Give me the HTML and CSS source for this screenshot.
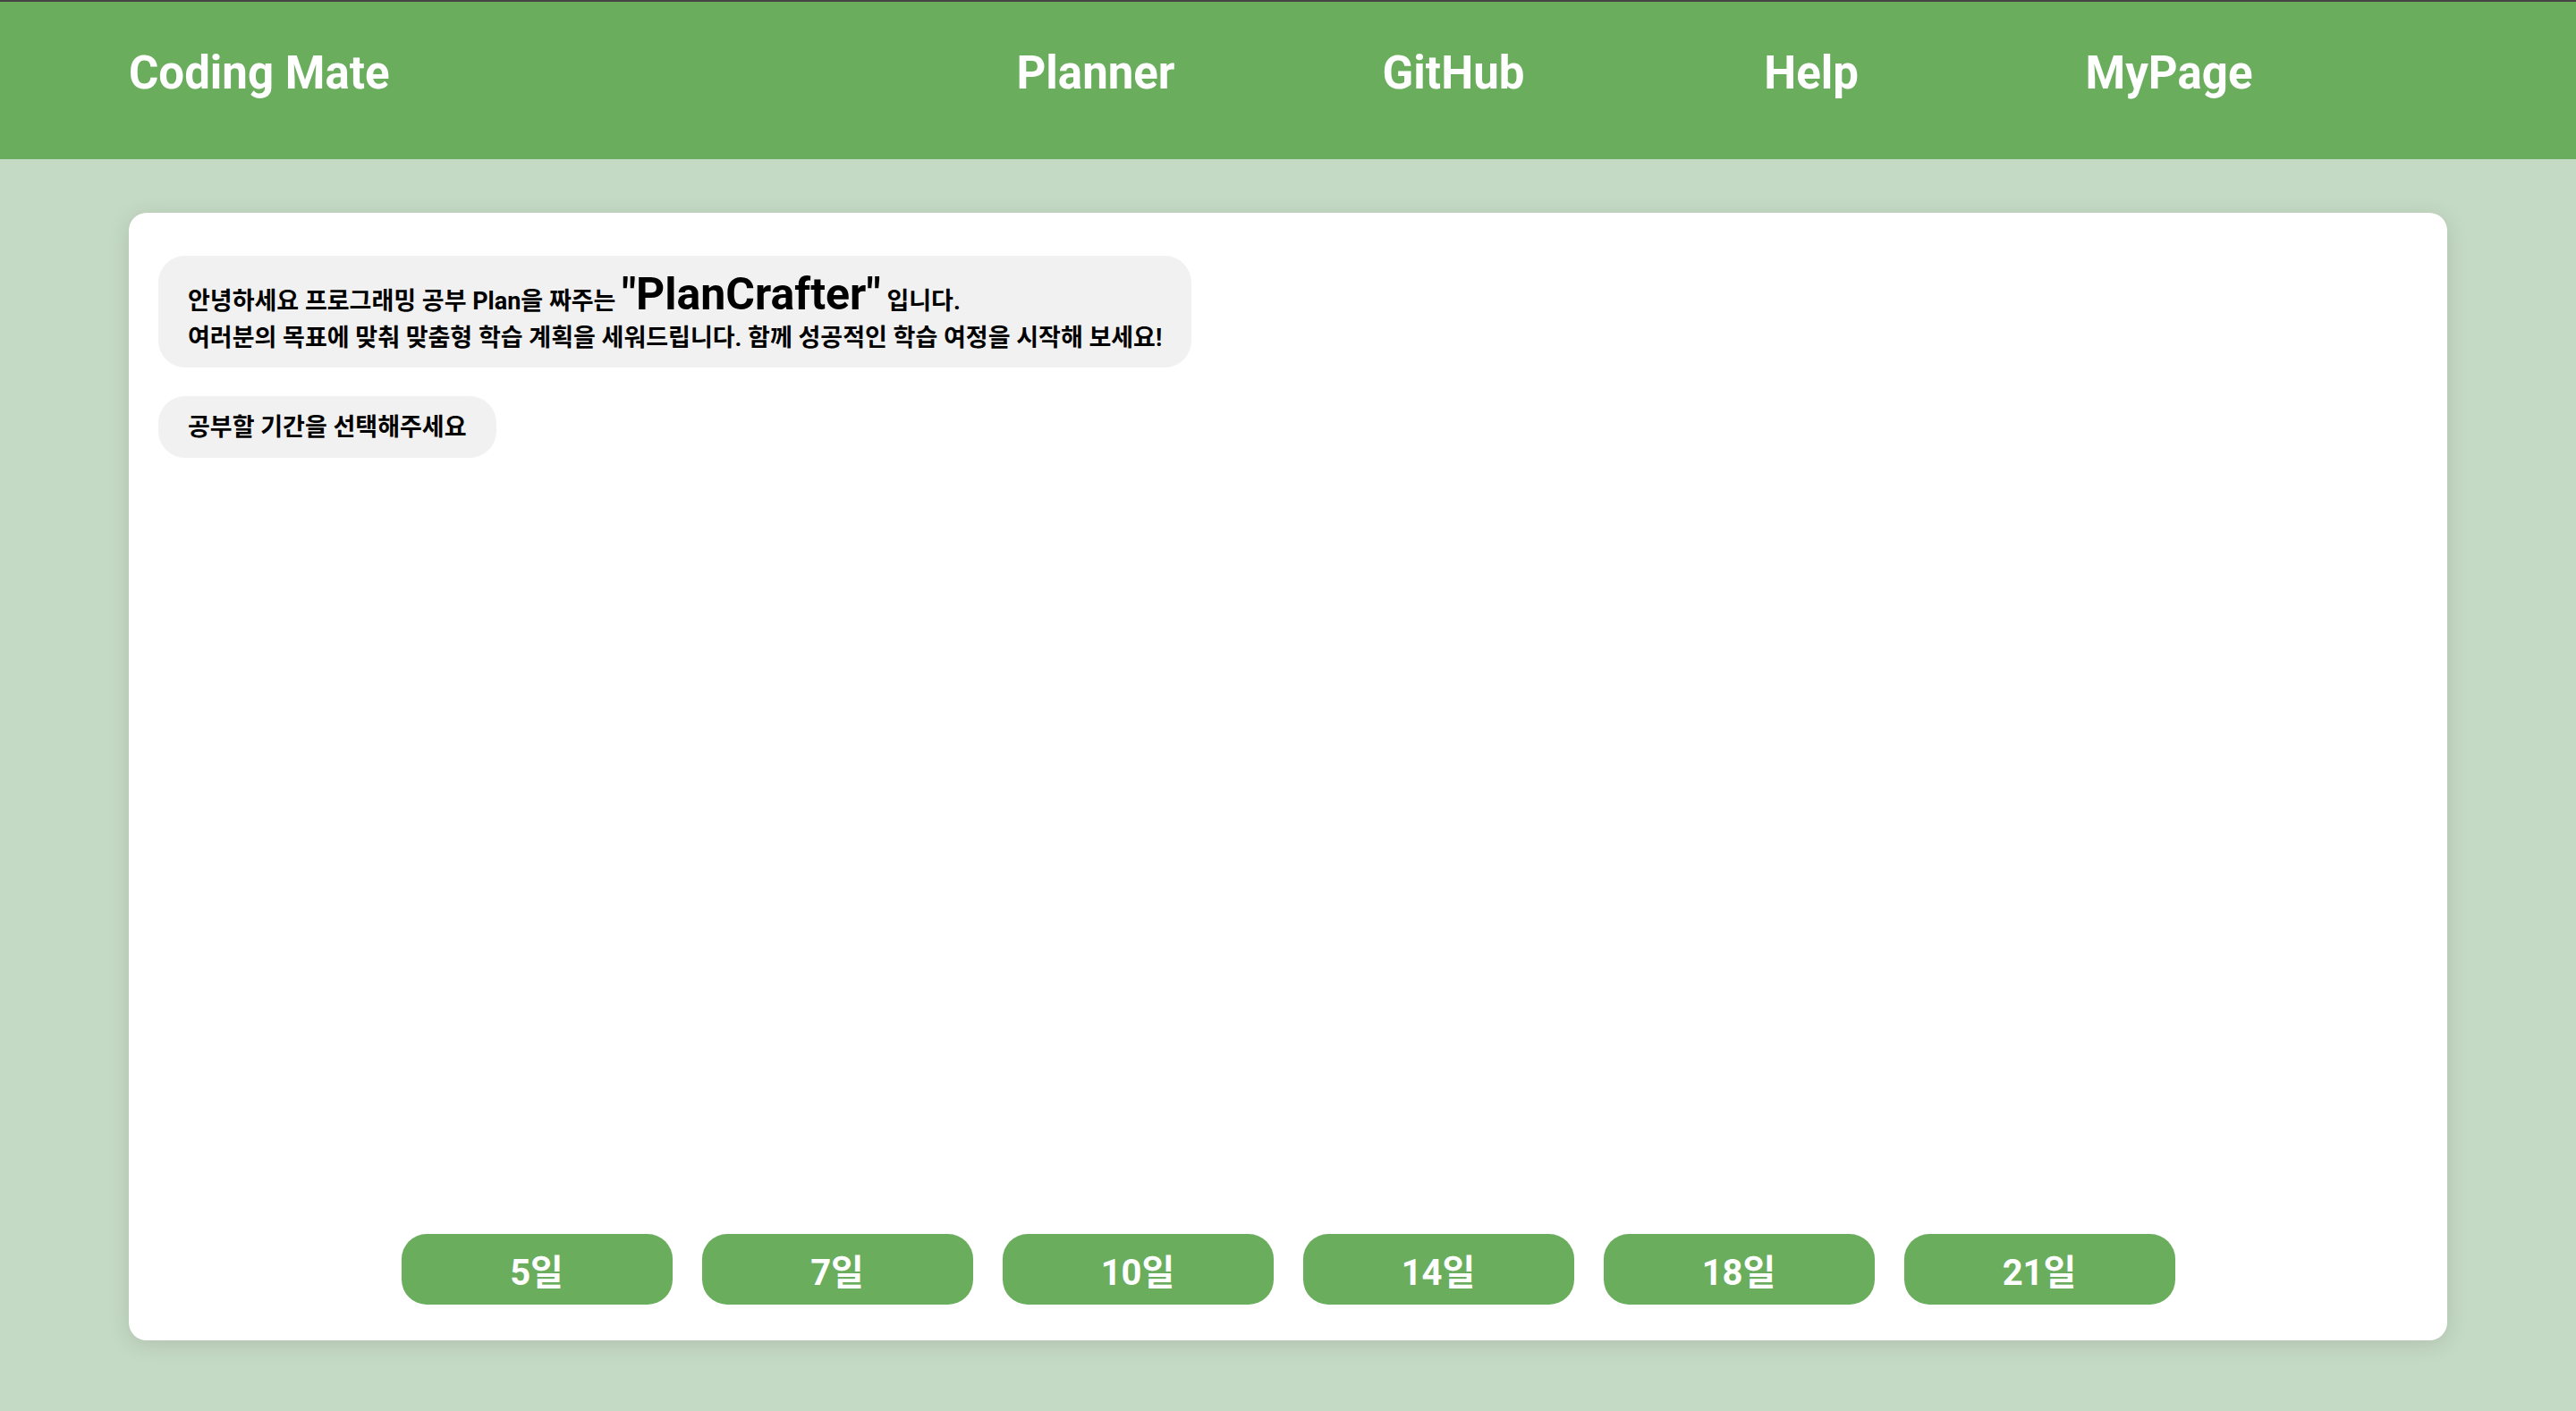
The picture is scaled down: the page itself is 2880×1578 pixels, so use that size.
FILE: index.html
```html
<!DOCTYPE html>
<html lang="ko">
<head>
<meta charset="utf-8">
<title>Coding Mate</title>
<link rel="stylesheet" href="styles.css">
</head>
<body>
<header class="topbar">
  <div class="logo">Coding Mate</div>
  <nav class="nav">
    <a class="nav-item">Planner</a>
    <a class="nav-item">GitHub</a>
    <a class="nav-item">Help</a>
    <a class="nav-item">MyPage</a>
  </nav>
</header>
<main class="card">
  <div class="chat">
    <div class="bubble bubble-intro">안녕하세요 프로그래밍 공부 Plan을 짜주는 <span class="brand">"PlanCrafter"</span> 입니다.<br>여러분의 목표에 맞춰 맞춤형 학습 계획을 세워드립니다. 함께 성공적인 학습 여정을 시작해 보세요!</div>
    <div class="bubble">공부할 기간을 선택해주세요</div>
  </div>
  <div class="choices">
    <button class="choice">5일</button>
    <button class="choice">7일</button>
    <button class="choice">10일</button>
    <button class="choice">14일</button>
    <button class="choice">18일</button>
    <button class="choice">21일</button>
  </div>
</main>
</body>
</html>
```

FILE: styles.css
```css
html, body {
  margin: 0;
  padding: 0;
}
body {
  background: #c5dac4;
  font-family: Roboto, "Noto Sans CJK KR", sans-serif;
  height: 1578px;
  overflow: hidden;
}
.topbar {
  box-sizing: border-box;
  height: 178px;
  border-top: 2px solid #444444;
  background: #69ad5d;
  display: flex;
  align-items: flex-start;
  padding: 50px 255px 0 144px;
  color: #ffffff;
  font-weight: 700;
  font-size: 51px;
}
.logo {
  line-height: normal;
}
.nav {
  margin-left: auto;
  display: flex;
}
.nav-item {
  width: 400px;
  text-align: center;
  color: #ffffff;
  text-decoration: none;
}
.card {
  box-sizing: border-box;
  margin: 60px 144px 0 144px;
  height: 1261px;
  background: #ffffff;
  border-radius: 20px;
  box-shadow: 0 4px 24px rgba(0, 0, 0, 0.12);
  padding: 48px 33px 40px 33px;
  display: flex;
  flex-direction: column;
}
.chat {
  display: flex;
  flex-direction: column;
  align-items: flex-start;
  gap: 32px;
}
.bubble {
  background: #f1f1f1;
  border-radius: 30px;
  padding: 14.5px 33px;
  font-size: 27px;
  font-weight: 700;
  line-height: 40px;
  color: #000000;
}
.bubble-intro {
  padding: 14px 33px 13px 33px;
}
.brand {
  font-size: 50px;
  line-height: normal;
}
.choices {
  margin-top: auto;
  display: flex;
  justify-content: center;
  gap: 33px;
}
.choice {
  width: 303px;
  height: 79px;
  border: none;
  border-radius: 28px;
  background: #69ad5d;
  color: #ffffff;
  font-family: Roboto, "Noto Sans CJK KR", sans-serif;
  font-weight: 700;
  font-size: 40px;
  padding: 0;
}
```
